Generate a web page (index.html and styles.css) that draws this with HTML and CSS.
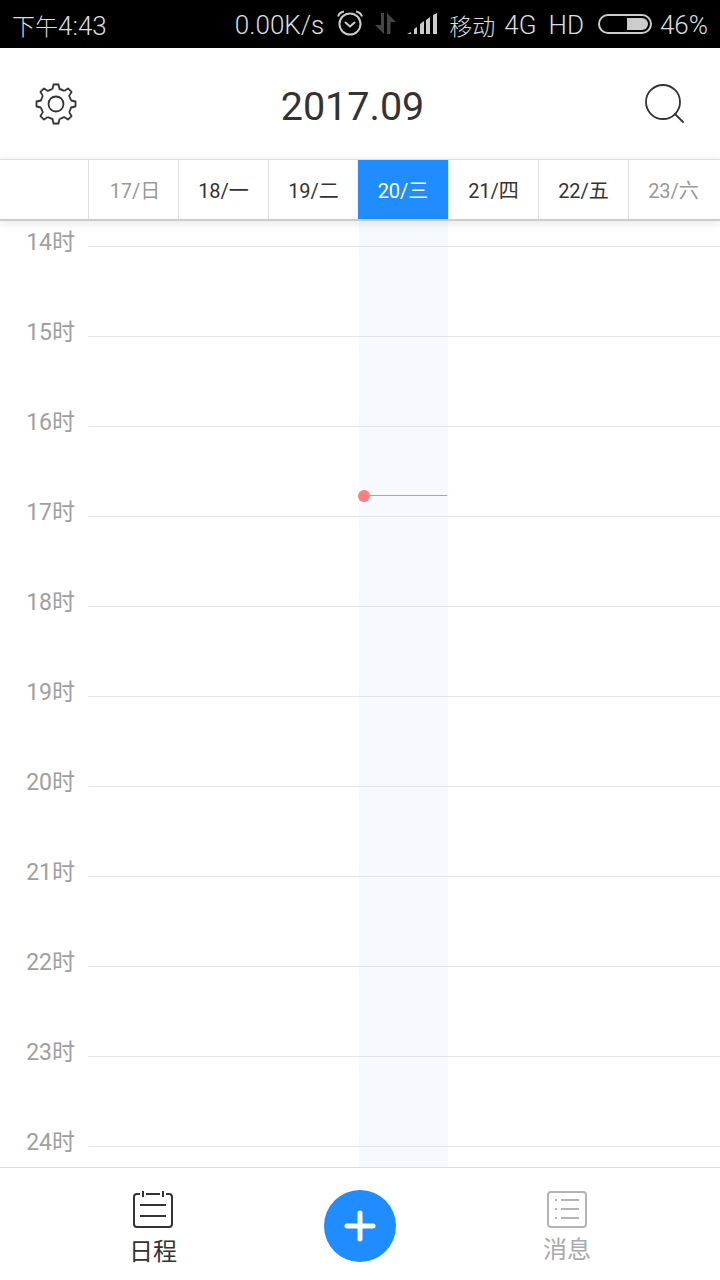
FILE: index.html
```html
<!DOCTYPE html>
<html lang="zh">
<head>
<meta charset="UTF-8">
<meta name="viewport" content="width=device-width, initial-scale=1.0">
<title>日程</title>
<link rel="stylesheet" href="styles.css">
</head>
<body>

<!-- status bar -->
<div class="statusbar">
  <span class="time"><span class="cjk">下午</span>4:43</span>
  <div class="status-right">
    <span class="speed">0.00K/s</span>
    <svg class="ic-clock" width="28" height="26" viewBox="0 0 28 26" fill="none" stroke="#ccc" stroke-width="2">
      <circle cx="14" cy="14" r="10.5"/>
      <path d="M9.5 12.5l4.5 4 4.5-4" stroke-linecap="round" stroke-linejoin="round"/>
      <path d="M2 6.5C3 3.5 5 2 8 1.5M26 6.5C25 3.500 23 2 20 1.500"/>
    </svg>
    <svg class="ic-arrows" width="22" height="22" viewBox="0 0 22 22" fill="#444">
      <path d="M9 0v21L0 12h6V0zM12 21V0l9 9h-5.500v12z"/>
    </svg>
    <svg class="ic-signal" width="30" height="22" viewBox="0 0 30 22" fill="#ccc">
      <path d="M0 21l4-2v2zM7 21v-5l3-2v7zM13 21V11l4-3v13zM19 21V7l4-3v17zM26 21V2l4-2v21z"/>
    </svg>
    <span class="carrier cjk">移动</span>
    <span class="net">4G</span>
    <span class="net net-hd">HD</span>
    <svg class="ic-battery" width="54" height="20" viewBox="0 0 54 20">
      <rect x="1" y="1" width="52" height="18" rx="9" fill="none" stroke="#ccc" stroke-width="2"/>
      <path d="M29 4h15a6 6 0 0 1 0 12H29z" fill="#ccc"/>
    </svg>
    <span class="batt-pct">46%</span>
  </div>
</div>

<!-- title bar -->
<header class="topbar">
  <svg class="ic-gear" width="44" height="44" viewBox="-22 -22 44 44" fill="none" stroke="#333" stroke-width="1.800" stroke-linejoin="round">
    <defs>
      <path id="tooth" d="M-3.500-15L-2.500-19.500H2.500L3.500-15A15.400 15.400 0 0 1 8.130-13.080"/>
    </defs>
    <use href="#tooth"/>
    <use href="#tooth" transform="rotate(45)"/>
    <use href="#tooth" transform="rotate(90)"/>
    <use href="#tooth" transform="rotate(135)"/>
    <use href="#tooth" transform="rotate(180)"/>
    <use href="#tooth" transform="rotate(225)"/>
    <use href="#tooth" transform="rotate(270)"/>
    <use href="#tooth" transform="rotate(315)"/>
    <circle r="7.500"/>
  </svg>
  <h1 class="month">2017.09</h1>
  <svg class="ic-search" width="44" height="44" viewBox="0 0 44 44" fill="none" stroke="#333" stroke-width="1.800">
    <circle cx="20" cy="19" r="17"/>
    <path d="M32 31l8 8" stroke-linecap="round"/>
  </svg>
</header>

<!-- week -->
<div class="week">
  <div class="week-gutter"></div>
  <div class="day off first-day">17/日</div>
  <div class="day">18/一</div>
  <div class="day">19/二</div>
  <div class="day today">20/三</div>
  <div class="day">21/四</div>
  <div class="day">22/五</div>
  <div class="day off">23/六</div>
</div>

<!-- hours -->
<main class="timeline">
  <div class="today-col">
    <div class="now">
      <span class="now-dot"></span>
      <span class="now-line"></span>
    </div>
  </div>
  <div class="hour first"><span class="hour-label">14时</span><span class="hour-line"></span></div>
  <div class="hour"><span class="hour-label">15时</span><span class="hour-line"></span></div>
  <div class="hour"><span class="hour-label">16时</span><span class="hour-line"></span></div>
  <div class="hour"><span class="hour-label">17时</span><span class="hour-line"></span></div>
  <div class="hour"><span class="hour-label">18时</span><span class="hour-line"></span></div>
  <div class="hour"><span class="hour-label">19时</span><span class="hour-line"></span></div>
  <div class="hour"><span class="hour-label">20时</span><span class="hour-line"></span></div>
  <div class="hour"><span class="hour-label">21时</span><span class="hour-line"></span></div>
  <div class="hour"><span class="hour-label">22时</span><span class="hour-line"></span></div>
  <div class="hour"><span class="hour-label">23时</span><span class="hour-line"></span></div>
  <div class="hour"><span class="hour-label">24时</span><span class="hour-line"></span></div>
</main>

<!-- bottom tabs -->
<nav class="tabbar">
  <div class="tab active">
    <svg width="40" height="38" viewBox="0 0 40 38" fill="none" stroke="#333" stroke-width="2">
      <path d="M7 4H4a3 3 0 0 0-3 3v27a3 3 0 0 0 3 3h32a3 3 0 0 0 3-3V7a3 3 0 0 0-3-3h-3M13 4h14"/>
      <path d="M10 1v6M30 1v6" stroke-width="2"/>
      <path d="M7 15h26M7 26h26"/>
    </svg>
    <span class="tab-label">日程</span>
  </div>
  <div class="fab">
    <svg width="36" height="36" viewBox="0 0 36 36" fill="none" stroke="#fff" stroke-width="5" stroke-linecap="round">
      <path d="M18 5v26M5 18h26"/>
    </svg>
  </div>
  <div class="tab">
    <svg width="40" height="38" viewBox="0 0 40 38" fill="none" stroke="#b4b4b4" stroke-width="2">
      <rect x="1" y="2" width="38" height="35" rx="3"/>
      <path d="M8 10h2M8 19h2M8 28h2M14 10h18M14 19h18M14 28h18"/>
    </svg>
    <span class="tab-label">消息</span>
  </div>
</nav>

</body>
</html>
```

FILE: styles.css
```css
* { box-sizing: border-box; }
body {
  margin: 0; width: 720px; height: 1280px;
  display: flex; flex-direction: column;
  background: #fff; color: #333; overflow: hidden;
  font-family: Roboto, "Noto Sans CJK SC", sans-serif;
}

/* status bar */
.statusbar {
  height: 48px; flex: none; background: #000; color: #ddd;
  display: flex; align-items: center; justify-content: space-between;
  padding: 2px 12px 0 12px; font-size: 26px; font-weight: 300;
}
.cjk { font-size: 23px; }
.status-right { display: flex; align-items: center; }
.ic-clock { margin: -4px 0 0 12px; }
.ic-arrows { margin: -2px 0 0 11px; }
.ic-signal { margin: -2px 0 0 10px; }
.carrier { margin-left: 12px; }
.net { margin-left: 9px; }
.net-hd { margin-left: 12px; }
.ic-battery { margin: -2px 0 0 14px; }
.batt-pct { margin-left: 8px; }

/* title bar */
.topbar {
  height: 111px; flex: none;
  display: flex; align-items: center; justify-content: space-between;
  padding: 0 33px 0 34px;
}
.month { margin: 5px 16px 0 0; font-size: 39.5px; font-weight: 400; color: #333; }
.ic-search { margin-top: 2px; }

/* week row */
.week {
  height: 62px; flex: none; display: flex;
  border-top: 1px solid #ddd; border-bottom: 2px solid #ccc;
  background: #fff; position: relative; z-index: 2;
  box-shadow: 0 2px 10px rgba(0,0,0,.1);
}
.week-gutter { width: 88px; }
.day {
  width: 90px; border-left: 1px solid #e0e0e0;
  display: flex; align-items: center; justify-content: center;
  font-size: 20px; color: #333;
}
.day.off { color: #999; }
.day.first-day { padding-left: 3px; }
.day.today { background: #1f8cff; color: #fff; border-left: 0; }

/* hours */
.timeline { flex: 1; position: relative; overflow: hidden; }
.hour { height: 90px; display: flex; position: relative; }
.hour.first { height: 26px; }
.hour-label {
  width: 88px; flex: none; align-self: flex-end;
  line-height: 30px; margin-bottom: -11px; padding-right: 13px;
  text-align: right; font-size: 23px; color: #a0a0a0;
}
.hour-line { flex: 1; border-bottom: 1px solid #e2e4e8; }

.today-col {
  position: absolute; left: 359px; top: 0; bottom: 0; width: 89px;
  background: #f6faff;
}
.now { position: absolute; left: -1px; top: 269px; width: 89px; height: 12px; z-index: 1; }
.now-dot {
  position: absolute; left: 0; top: 0;
  width: 12px; height: 12px; border-radius: 50%; background: #ff7c80;
}
.now-line {
  position: absolute; left: 10px; right: 0; top: 5px;
  height: 1px; background: #e88a8e;
}

/* bottom tabs */
.tabbar {
  height: 113px; flex: none; border-top: 1px solid #ddd; background: #fff;
  display: grid; grid-template-columns: 306px 108px 306px;
  position: relative; z-index: 2;
}
.tab {
  display: flex; flex-direction: column; align-items: center;
  padding-top: 22px; font-size: 24px; color: #aaa;
}
.tab-label { line-height: 30px; margin-top: 7px; }
.tab.active { color: #333; }
.tab.active .tab-label { margin-top: 9px; }
.fab {
  width: 72px; height: 72px; border-radius: 50%; background: #1f8cff;
  display: flex; align-items: center; justify-content: center;
  margin: 22px auto 0;
}
```
